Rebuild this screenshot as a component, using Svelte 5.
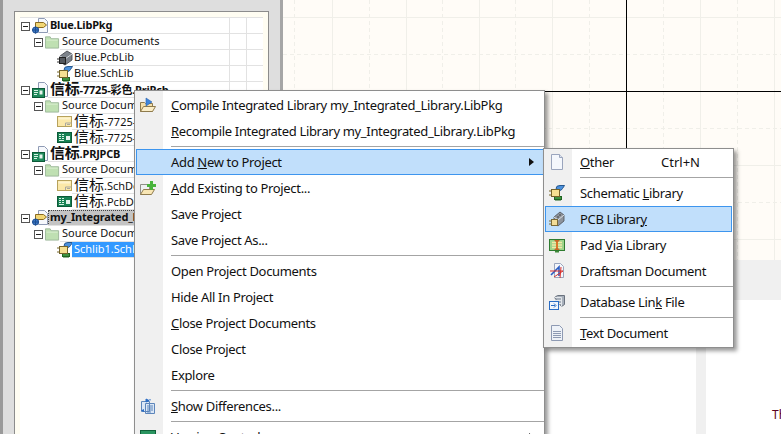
<script lang="ts">
	type Row = { level: number; icon: string; label: string; kind?: string };

	const rows: Row[] = [
		{ level: 0, icon: 'libpkg', label: 'Blue.LibPkg', kind: 'project' },
		{ level: 1, icon: 'folder', label: 'Source Documents' },
		{ level: 2, icon: 'pcblib', label: 'Blue.PcbLib' },
		{ level: 2, icon: 'schlib', label: 'Blue.SchLib' },
		{ level: 0, icon: 'prjpcb', label: '信标-7725-彩色.PrjPcb', kind: 'project' },
		{ level: 1, icon: 'folder', label: 'Source Documents' },
		{ level: 2, icon: 'schdoc', label: '信标-7725-彩色.SchDoc' },
		{ level: 2, icon: 'pcbdoc', label: '信标-7725-彩色.PcbDoc' },
		{ level: 0, icon: 'prjpcb', label: '信标.PRJPCB', kind: 'project' },
		{ level: 1, icon: 'folder', label: 'Source Documents' },
		{ level: 2, icon: 'schdoc', label: '信标.SchDoc' },
		{ level: 2, icon: 'pcbdoc', label: '信标.PcbDoc' },
		{ level: 0, icon: 'libpkg', label: 'my_Integrated_Library.LibPkg', kind: 'project focus' },
		{ level: 1, icon: 'folder', label: 'Source Documents' },
		{ level: 2, icon: 'schlib', label: 'Schlib1.SchLib', kind: 'selected' }
	];

	// label split round the mnemonic: [before, underlined, after]
	const mainMenu = [
		{ icon: 'compile', text: ['', 'C', 'ompile Integrated Library my_Integrated_Library.LibPkg'] },
		{ icon: '', text: ['', 'R', 'ecompile Integrated Library my_Integrated_Library.LibPkg'] },
		{ sep: true },
		{ icon: '', text: ['Add ', 'N', 'ew to Project'], active: true, arrow: true },
		{ icon: 'addexisting', text: ['', 'A', 'dd Existing to Project...'] },
		{ icon: '', text: ['Save Project', '', ''] },
		{ icon: '', text: ['Save Project As...', '', ''] },
		{ sep: true },
		{ icon: '', text: ['Open Project Documents', '', ''] },
		{ icon: '', text: ['Hide All In Project', '', ''] },
		{ icon: '', text: ['', 'C', 'lose Project Documents'] },
		{ icon: '', text: ['Close Project', '', ''] },
		{ icon: '', text: ['Explore', '', ''] },
		{ sep: true },
		{ icon: 'differences', text: ['', 'S', 'how Differences...'] },
		{ sep: true },
		{ icon: 'version', text: ['Version Control', '', ''], arrow: true }
	];

	const subMenu = [
		{ icon: 'other', text: ['', 'O', 'ther'], shortcut: 'Ctrl+N' },
		{ sep: true },
		{ icon: 'schlib', text: ['Schematic ', 'L', 'ibrary'] },
		{ icon: 'pcbmenu', text: ['PCB Librar', 'y', ''], active: true },
		{ icon: 'padvia', text: ['Pad ', 'V', 'ia Library'] },
		{ icon: 'draftsman', text: ['Draftsman Document', '', ''] },
		{ sep: true },
		{ icon: 'dblink', text: ['Database Lin', 'k', ' File'] },
		{ sep: true },
		{ icon: 'textdoc', text: ['', 'T', 'ext Document'] }
	];

	// sheet grid, in canvas coordinates
	const solidX = [49, 123, 196, 269, 417, 491];
	const dashedX = [11, 86, 159, 232, 306, 380, 454];
	const solidY = [17, 165, 239];
	const dashedY = [54, 128, 202];

	// the two big glyphs render much larger than the latin text in this tree
	const parts = (label: string) => label.split(/(信标)/).filter(Boolean);
</script>

{#snippet icon(name)}
	<svg class="ico" viewBox="0 0 16 16" width="16" height="16" aria-hidden="true">
		{#if name === 'libpkg'}
			<path d="M6.5.5h6l3 3v11h-9z" fill="#f6f8fc" stroke="#8f9bb5" />
			<path d="M3.5 4.5h8l3 2.5-3 2.5h-8z" fill="#f2d674" stroke="#8a6a20" />
			<circle cx="3.5" cy="12" r="3" fill="#3b78c8" stroke="#1f4f90" />
			<path d="M0 12h7M3.500 8.500v7" stroke="#1f4f90" />
		{:else if name === 'folder'}
			<path d="M.5 4.500v-2h5l1 2h8v10H.5z" fill="#bfe0b2" stroke="#9db79a" />
			<path d="M1.500 5.500h12v1h-12z" fill="#dcf0d2" />
		{:else if name === 'pcblib'}
			<path d="M3 6l7-5 5 3v6l-7 5-5-3z" fill="#7d838b" stroke="#3d4046" stroke-width=".8" />
			<path d="M3 6l5 3 7-5" fill="none" stroke="#d0d4d8" />
			<path d="M8 9v6" stroke="#2d3036" />
			<rect x="2.500" y="7.500" width="6" height="6" fill="#54585e" stroke="#222" />
			<path d="M0 9h2M0 12h2" stroke="#333" />
		{:else if name === 'pcbmenu'}
			<path d="M5 6l6-5 4 3v6l-6 5-4-3z" fill="#8e949c" stroke="#4a4e54" stroke-width=".8" />
			<path d="M5 6l4 3 6-5" fill="none" stroke="#dde0e4" />
			<path d="M10 4h2M8 6h2" stroke="#444" />
			<rect x="2.500" y="8.500" width="6" height="6" fill="#f3dc96" stroke="#7b6a36" />
			<path d="M0 10h2M0 13h2" stroke="#7b6a36" />
		{:else if name === 'schlib'}
			<path d="M7 3.500Q7 .500 11 .500h4.500l-2 3q-1 2-3 2z" fill="#4b90dc" stroke="#24578f" />
			<rect x="5.500" y="11.500" width="7" height="3" fill="#3e9140" stroke="#1e6420" />
			<path d="M7 15v1M9 15v1M11 15v1" stroke="#1e6420" />
			<rect x="2.500" y="4.500" width="8" height="7" fill="#f5e092" stroke="#75642a" />
			<path d="M0 6h2M0 10h2" stroke="#75642a" />
		{:else if name === 'prjpcb'}
			<path d="M6.500.5h6l3 3v11h-9z" fill="#f6f8fc" stroke="#8f9bb5" />
			<rect x=".5" y="6.500" width="12" height="9" fill="#1f8a5c" stroke="#0c5a38" />
			<path d="M2 8.500h4M2 10.500h4M2 12.500h3" stroke="#d8f2e4" />
			<rect x="7.500" y="8.500" width="3" height="4" fill="#e8f4ee" />
		{:else if name === 'schdoc'}
			<rect x=".5" y="2.500" width="14" height="10" fill="#fbe8a8" stroke="#b7a25c" />
			<rect x="1.500" y="3.500" width="12" height="2" fill="#fdf3cf" />
			<path d="M8.500 12v-3h6M10 10.500h3" fill="none" stroke="#a8a7a0" />
		{:else if name === 'pcbdoc'}
			<rect x=".5" y="2.500" width="14" height="10" fill="#178153" stroke="#0c5a38" />
			<path d="M2 4.500h2M5 4.500h2M2 6.500h2M5 6.500h2M2 8.500h2M5 8.500h2M2 10.500h5" stroke="#d8f2e4" />
			<rect x="9" y="6" width="4" height="4" fill="#e4f3ec" />
		{:else if name === 'compile'}
			<path d="M.5 5.500h4l1 1h7v8h-12z" fill="#f5dfa8" stroke="#8f7b4d" />
			<path d="M.5 14.500l3-5h12l-3 5z" fill="#fbeec8" stroke="#8f7b4d" />
			<path d="M6 1v8l6-4z" fill="#3f86dc" stroke="#2a62ad" stroke-width=".6" />
		{:else if name === 'addexisting'}
			<path d="M.5 4.500h9v10h-9z" fill="#eef0f2" stroke="#8f8f88" />
			<path d="M.5 14.500l3-5h11l-3 5z" fill="#f8e6b4" stroke="#8f7b4d" />
			<path d="M10 1h3v3h3v3h-3v3h-3v-3h-3v-3h3z" fill="#49b43c" />
		{:else if name === 'differences'}
			<path d="M1.500 3.500h8v10h-8zM5.500 5.500h9v10h-9z" fill="#dbe7f6" stroke="#5d86bb" />
			<path d="M7 8h6M7 10h6M7 12h6M7 14h4" stroke="#5d86bb" />
			<path d="M6 1l3 1.500-3 1.500zM10 1v1.500" fill="#2a6cc4" stroke="#2a6cc4" />
			<path d="M4 11l-3 1.500 3 1.500z" fill="#2a6cc4" />
		{:else if name === 'version'}
			<rect x=".5" y="1.500" width="15" height="12" fill="#2a9460" stroke="#0f6038" />
		{:else if name === 'other'}
			<path d="M2.500.5h8l3 3v12h-11z" fill="#f4f7fc" stroke="#9aa5bd" />
			<path d="M10.500.5v3h3" fill="#dde4f0" stroke="#9aa5bd" />
		{:else if name === 'padvia'}
			<rect x=".5" y="2.500" width="15" height="11" fill="#9ed48a" stroke="#2f7c30" />
			<path d="M3 5.500h10M3 8h10M3 10.500h10" stroke="#f4e7a8" stroke-width="1.400" />
			<path d="M5 3l3 3 3-3zM5 13l3-3 3 3z" fill="#c9682a" />
			<path d="M7 5h2v6H7z" fill="#d9782a" />
			<path d="M6 14h4v1.500H6z" fill="#3f8a3a" />
		{:else if name === 'draftsman'}
			<path d="M5.500.5h6l3 3v11h-9z" fill="#f4f6fa" stroke="#9aa5bd" />
			<path d="M2 12L10 4v9" fill="none" stroke="#2a5cc4" stroke-width="1.600" />
			<path d="M1 8h13L5 14M12 4l-1 11" fill="none" stroke="#d8302c" stroke-width="1" />
		{:else if name === 'dblink'}
			<path d="M5.500 3.500l3-2h7v9l-3 2z" fill="#a8b0bb" stroke="#6a727e" />
			<path d="M5.500 3.500h7v9M6 6.500h6M6 9.500h6" fill="none" stroke="#e2e6ea" />
			<rect x=".5" y="7.500" width="9" height="8" fill="#f2f6fc" stroke="#2a6cc4" />
			<path d="M2 11.500h4M5 9.500l2 2-2 2" fill="none" stroke="#2a6cc4" />
		{:else if name === 'textdoc'}
			<path d="M2.500.5h8l3 3v12h-11z" fill="#eef2f8" stroke="#8e9ab3" />
			<path d="M4 6.500h8M4 8.500h8M4 10.500h8M4 12.500h8" stroke="#8e9ab3" />
		{/if}
	</svg>
{/snippet}

{#snippet menuRows(items)}
	{#each items as item}
		{#if item.sep}
			<div class="sep"></div>
		{:else}
			<div class="item" class:active={item.active}>
				<span class="ico-cell">
					{#if item.icon}{@render icon(item.icon)}{/if}
				</span>
				<span class="label">{item.text[0]}<u>{item.text[1]}</u>{item.text[2]}</span>
				{#if item.shortcut}<span class="shortcut">{item.shortcut}</span>{/if}
				{#if item.arrow}<span class="arrow"></span>{/if}
			</div>
		{/if}
	{/each}
{/snippet}

<div class="screen">
	<aside class="dock">
		<div class="panel">
			<div class="tree">
				{#each rows as row}
					<div class="row">
						<div class="head lvl-{row.level}">
							{#if row.level < 2}<span class="toggle"></span>{/if}
							{@render icon(row.icon)}
						</div>
						<div class="name {row.kind ?? ''}">
							<span class="text">
								{#each parts(row.label) as part}
									{#if part === '信标'}<span class="big">{part}</span>{:else}{part}{/if}
								{/each}
							</span>
						</div>
						<div class="col"></div>
						<div class="col"></div>
					</div>
				{/each}
			</div>
		</div>
	</aside>

	<main class="canvas">
		<svg class="sheet" width="498" height="260" aria-hidden="true">
			{#each solidX as x}
				<line x1={x + 0.5} x2={x + 0.5} y1="0" y2="260" stroke="#f0efe9" />
			{/each}
			{#each dashedX as x}
				<line x1={x + 0.5} x2={x + 0.5} y1="0" y2="260" stroke="#f0efe9" stroke-dasharray="4 3" />
			{/each}
			{#each solidY as y}
				<line x1="0" x2="498" y1={y + 0.5} y2={y + 0.5} stroke="#f0efe9" />
			{/each}
			{#each dashedY as y}
				<line x1="0" x2="498" y1={y + 0.5} y2={y + 0.5} stroke="#f0efe9" stroke-dasharray="4 3" />
			{/each}
			<line x1="343.500" x2="343.500" y1="0" y2="260" stroke="#000" />
			<line x1="0" x2="498" y1="91.500" y2="91.500" stroke="#000" />
		</svg>
		<div class="band"></div>
		<div class="lower">
			<div class="page"></div>
			<div class="gutter-strip"></div>
			<div class="page note">Th</div>
		</div>
	</main>

	<div class="menu main-menu">{@render menuRows(mainMenu)}</div>
	<div class="menu sub-menu">{@render menuRows(subMenu)}</div>
</div>

<style>
	:global(body) {
		margin: 0;
	}

	.screen {
		position: relative;
		display: flex;
		width: 781px;
		height: 434px;
		overflow: hidden;
		background: #fff;
		font-family: 'Noto Sans', 'Noto Sans CJK SC', sans-serif;
		color: #111;
	}

	.dock {
		box-sizing: border-box;
		flex: none;
		width: 283px;
		padding: 11px 11px 0 11px;
		background: #dedede;
		border-left: 3px solid #9a9a9a;
		border-right: 3px solid #a6a6a6;
	}

	.panel {
		box-sizing: border-box;
		height: 100%;
		padding: 5px 5px 0;
		background: #fffdf2;
		border: 1px solid #8c8c8c;
		border-bottom: 0;
	}

	.tree {
		height: 100%;
		background: #fff;
		border-top: 1px solid #e2e2e2;
		font-size: 11px;
	}

	.row {
		display: flex;
		height: 16px;
	}

	.head {
		display: flex;
		flex: none;
		align-items: center;
		box-sizing: border-box;
	}

	.lvl-0 {
		width: 28px;
		padding-left: 1px;
	}

	.lvl-1 {
		width: 40px;
		padding-left: 14px;
	}

	.lvl-2 {
		width: 52px;
		padding-left: 37px;
	}

	.toggle {
		position: relative;
		flex: none;
		box-sizing: border-box;
		width: 9px;
		height: 9px;
		margin-right: 2px;
		border: 1px solid #555;
		background: #fff;
	}

	.toggle::after {
		content: '';
		position: absolute;
		left: 1px;
		top: 3px;
		width: 5px;
		height: 1px;
		background: #222;
	}

	.lvl-1 .ico {
		width: 15px;
	}

	.name {
		flex: 1;
		min-width: 0;
		white-space: nowrap;
		overflow: hidden;
		border-bottom: 1px solid #e2e2e2;
		line-height: 13px;
	}

	.text {
		display: inline-block;
		height: 16px;
		padding: 0 2px;
		vertical-align: top;
	}

	.big {
		font-size: 15px;
		line-height: 13px;
	}

	.lvl-0 + .name {
		font-weight: 700;
		letter-spacing: -0.2px;
	}

	.focus .text {
		background: #c4c4c4;
		outline: 1px dotted #444;
		outline-offset: -1px;
	}

	.selected .text {
		min-width: 70px;
		background: #3399ff;
		color: #fff;
	}

	.col {
		flex: none;
		width: 17px;
		box-sizing: border-box;
		border-left: 1px solid #e2e2e2;
		border-bottom: 1px solid #e2e2e2;
	}

	.ico {
		display: block;
		flex: none;
	}

	.canvas {
		display: flex;
		flex: 1;
		flex-direction: column;
		min-width: 0;
	}

	.sheet {
		display: block;
		flex: none;
		background: #fffcf7;
	}

	.band {
		flex: none;
		height: 40px;
		background: #f0f0f0;
	}

	.lower {
		display: flex;
		flex: 1;
	}

	.page {
		width: 413px;
		flex: none;
		background: #fff;
	}

	.gutter-strip {
		width: 10px;
		flex: none;
		background: #f0f0f0;
	}

	.note {
		flex: 1;
		width: auto;
		padding: 107px 0 0 66px;
		font-size: 12px;
		line-height: 16px;
		color: #5a0020;
	}

	.menu {
		position: absolute;
		box-sizing: border-box;
		background: linear-gradient(to right, #f0f0f0 28px, #fff 28px);
		border: 1px solid #8e8e8e;
		box-shadow: 3px 3px 4px rgba(0, 0, 0, 0.4);
		font-size: 13px;
	}

	.main-menu {
		left: 134px;
		top: 90px;
		width: 411px;
		padding-top: 1px;
	}

	.sub-menu {
		left: 543px;
		top: 148px;
		width: 191px;
		height: 200px;
	}

	.item {
		display: flex;
		align-items: center;
		box-sizing: border-box;
		height: 26px;
		margin: 0 0 0 1px;
		border: 1px solid transparent;
		white-space: nowrap;
	}

	.sub-menu .item {
		margin-right: 1px;
	}

	.item.active {
		background: #c1dffb;
		border-color: #3d95ee;
	}

	.ico-cell {
		flex: none;
		box-sizing: border-box;
		width: 34px;
		padding-left: 3px;
	}

	.label {
		padding-bottom: 1px;
		letter-spacing: -0.33px;
	}

	.shortcut {
		margin-left: auto;
		padding: 0 31px 1px 0;
	}

	.arrow {
		width: 0;
		height: 0;
		margin-left: auto;
		margin-right: 9px;
		border-left: 5px solid #111;
		border-top: 4px solid transparent;
		border-bottom: 4px solid transparent;
	}

	.sep {
		height: 5px;
		margin-left: 36px;
		background: linear-gradient(#a4a4a4, #a4a4a4) center / 100% 1px no-repeat;
	}
</style>
